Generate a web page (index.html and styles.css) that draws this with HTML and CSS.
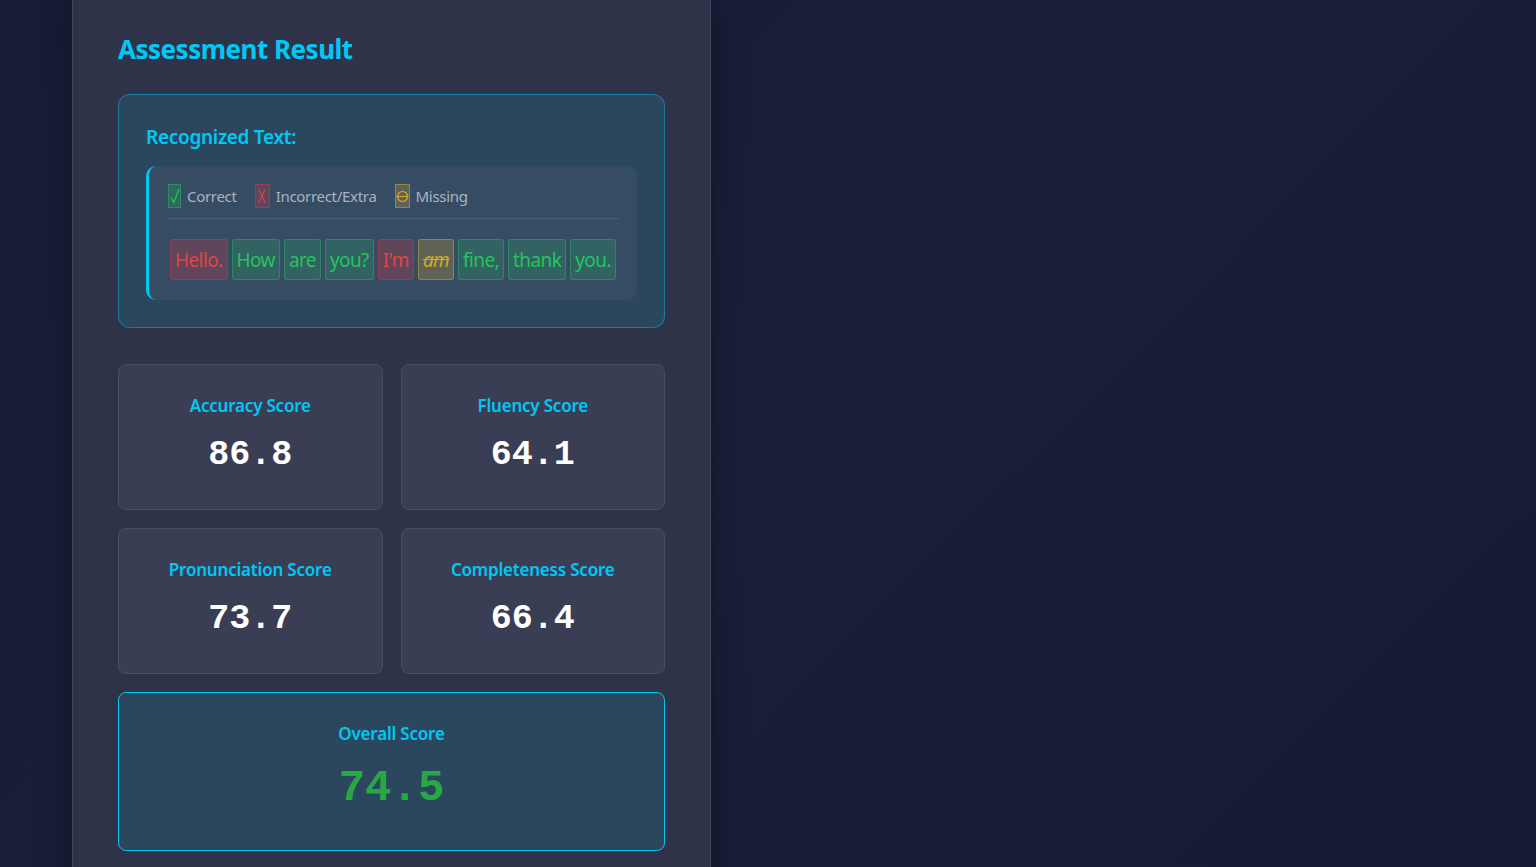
FILE: index.html
```html
<!DOCTYPE html>
<html lang="en">
<head>
<meta charset="utf-8">
<title>Assessment Result</title>
<link rel="stylesheet" href="styles.css">
</head>
<body>
<div class="page">
  <section class="panel">
    <h2 class="title">Assessment Result</h2>

    <div class="recognized">
      <h3 class="rec-title">Recognized Text:</h3>
      <div class="rec-inner">
        <div class="legend">
          <span class="legend-item"><span class="mark mark-ok"><svg width="10" height="16" viewBox="0 0 10 16"><path d="M1 9.5 L3.8 14.5 L9 1" fill="none" stroke="currentColor" stroke-width="1.2"/></svg></span>Correct</span>
          <span class="legend-item"><span class="mark mark-bad"><svg width="10" height="16" viewBox="0 0 10 16"><path d="M2 1.5 C4 6 6 10 8.5 15 M8 1.5 C6 6 4 10 1.5 15" fill="none" stroke="currentColor" stroke-width="1.1"/></svg></span>Incorrect/Extra</span>
          <span class="legend-item"><span class="mark mark-miss"><svg width="13" height="13" viewBox="0 0 13 13"><circle cx="6.5" cy="6.5" r="5" fill="none" stroke="currentColor" stroke-width="1.2"/><path d="M0.5 6.5 H12.5" stroke="currentColor" stroke-width="1.2"/></svg></span>Missing</span>
        </div>
        <div class="words">
          <span class="word bad">Hello.</span>
          <span class="word ok">How</span>
          <span class="word ok">are</span>
          <span class="word ok">you?</span>
          <span class="word bad">I'm</span>
          <span class="word miss">am</span>
          <span class="word ok">fine,</span>
          <span class="word ok">thank</span>
          <span class="word ok">you.</span>
        </div>
      </div>
    </div>

    <div class="scores">
      <div class="score-card">
        <div class="score-label">Accuracy Score</div>
        <div class="score-value">86.8</div>
      </div>
      <div class="score-card">
        <div class="score-label">Fluency Score</div>
        <div class="score-value">64.1</div>
      </div>
      <div class="score-card">
        <div class="score-label">Pronunciation Score</div>
        <div class="score-value">73.7</div>
      </div>
      <div class="score-card">
        <div class="score-label">Completeness Score</div>
        <div class="score-value">66.4</div>
      </div>
      <div class="score-card overall">
        <div class="score-label">Overall Score</div>
        <div class="score-value overall-value">74.5</div>
      </div>
    </div>
  </section>
</div>
</body>
</html>
```

FILE: styles.css
```css
* { box-sizing: border-box; }

html, body {
  margin: 0;
  padding: 0;
  height: 100%;
}

body {
  background: linear-gradient(135deg, #181c35 0%, #1a1f3a 50%, #161b33 100%);
  font-family: "Noto Sans", "Open Sans", sans-serif;
  color: #e6e8ef;
  overflow: hidden;
}

.page {
  display: flex;
  height: 867px;
  padding-left: 72px;
}

.panel {
  width: 639px;
  height: 900px;
  background: #2f3349;
  border-left: 1px solid #43475f;
  border-right: 1px solid #43475f;
  padding: 33px 45px 0 45px;
  box-shadow: 0 0 30px rgba(0, 0, 0, 0.35);
}

.title {
  margin: 0 0 29px 0;
  font-size: 26px;
  line-height: 32px;
  font-weight: 700;
  color: #00c8f5;
  letter-spacing: -0.5px;
}

.recognized {
  border: 1px solid rgba(0, 190, 240, 0.45);
  border-radius: 12px;
  background: #2b475e;
  padding: 29px 27px 27px 27px;
}

.rec-title {
  margin: 0 0 16px 0;
  font-size: 19px;
  line-height: 26px;
  font-weight: 600;
  color: #00c8f5;
  letter-spacing: -0.3px;
}

.rec-inner {
  background: #364c63;
  border-left: 3px solid #00c8f5;
  border-radius: 10px;
  padding: 18px 18px 20px 19px;
}

.legend {
  display: flex;
  align-items: center;
  gap: 18px;
  padding-bottom: 10px;
  border-bottom: 1px solid #4a5e75;
  font-size: 15px;
  line-height: 24px;
  color: #aab3c2;
  letter-spacing: -0.3px;
}

.legend-item {
  display: flex;
  align-items: center;
  gap: 6px;
}

.mark {
  display: inline-flex;
  align-items: center;
  justify-content: center;
  width: 13px;
  height: 24px;
  border: 1px solid;
}

.mark svg {
  display: block;
}

.mark-ok {
  color: #22c55e;
  background: rgba(34, 197, 94, 0.22);
  border-color: rgba(34, 197, 94, 0.45);
}

.mark-bad {
  width: 15px;
  color: #e04444;
  background: rgba(220, 53, 69, 0.25);
  border-color: rgba(220, 53, 69, 0.5);
}

.mark-miss {
  width: 15px;
  color: #d6a72a;
  background: rgba(214, 167, 42, 0.25);
  border-color: rgba(214, 167, 42, 0.5);
}

.words {
  display: flex;
  flex-wrap: wrap;
  gap: 4px;
  padding: 20px 0 0 2px;
}

.word {
  display: inline-flex;
  align-items: center;
  height: 41px;
  padding: 0 4px;
  border: 1px solid;
  border-radius: 3px;
  font-size: 19px;
  letter-spacing: -0.6px;
  white-space: nowrap;
}

.word.ok {
  color: #22c55e;
  background: rgba(34, 197, 94, 0.18);
  border-color: rgba(34, 197, 94, 0.4);
}

.word.bad {
  color: #e04444;
  background: rgba(220, 53, 69, 0.25);
  border-color: rgba(220, 53, 69, 0.45);
}

.word.miss {
  color: #d6a72a;
  background: rgba(214, 167, 42, 0.25);
  border-color: rgba(214, 167, 42, 0.45);
  font-style: italic;
  text-decoration: line-through;
}

.scores {
  display: grid;
  grid-template-columns: 1fr 1fr;
  gap: 18px;
  margin-top: 36px;
}

.score-card {
  height: 146px;
  background: #3a3e55;
  border: 1px solid #4a4e64;
  border-radius: 8px;
  display: flex;
  flex-direction: column;
  align-items: center;
  padding-top: 29px;
}

.score-label {
  font-size: 17px;
  line-height: 24px;
  font-weight: 600;
  color: #00c8f5;
  letter-spacing: -0.2px;
}

.score-value {
  margin-top: 17px;
  font-family: "Liberation Mono", "Courier New", monospace;
  font-weight: 700;
  font-size: 35px;
  line-height: 40px;
  color: #ffffff;
}

.overall {
  grid-column: 1 / 3;
  height: 159px;
  background: #2b475e;
  border: 1px solid #00c8f5;
  padding-top: 29px;
}

.overall-value {
  margin-top: 18px;
  font-size: 44px;
  line-height: 48px;
  color: #28a745;
}
```
